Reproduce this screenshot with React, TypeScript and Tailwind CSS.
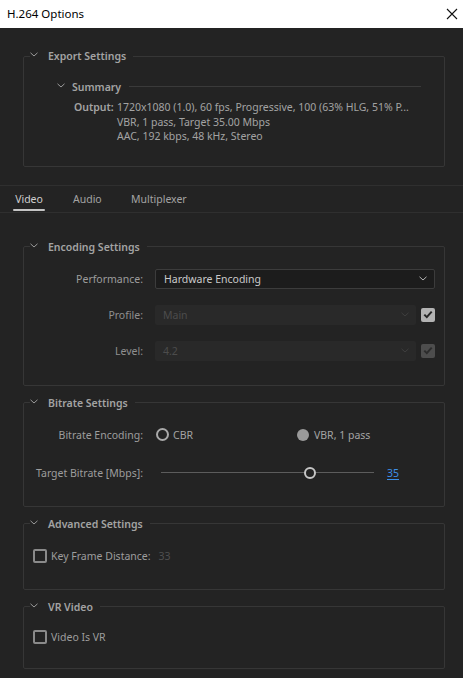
import React from "react";

function Chevron({ className = "" }: { className?: string }) {
  return (
    <svg width="8" height="5" viewBox="0 0 8 5" className={className}>
      <path d="M0.5 0.8 L4 4 L7.5 0.8" fill="none" stroke="#9a9a9a" strokeWidth="1" />
    </svg>
  );
}

function Group({
  title,
  children,
  className = "",
}: {
  title: string;
  children: React.ReactNode;
  className?: string;
}) {
  return (
    <fieldset className={"ml-[23px] mr-[18px] border border-[#363636] rounded-[2px] " + className}>
      <legend className="ml-[6px] pr-[7px] h-[16px] leading-[16px] flex items-center">
        <Chevron className="mr-[10px] mb-[3px]" />
        <span className="font-semibold text-[#a3a3a3] text-[10.5px]">{title}</span>
      </legend>
      {children}
    </fieldset>
  );
}

function Dropdown({
  value,
  disabled = false,
  className = "",
}: {
  value: string;
  disabled?: boolean;
  className?: string;
}) {
  return (
    <div
      className={
        "h-[20px] flex items-center justify-between pl-[8px] pr-[7px] rounded-[2px] " +
        (disabled
          ? "bg-[#292929] text-[#4c4c4c] "
          : "bg-[#1c1c1c] border border-[#3c3c3c] text-[#cacaca] ") +
        className
      }
    >
      <span>{value}</span>
      <svg width="8" height="5" viewBox="0 0 8 5">
        <path
          d="M0.5 0.8 L4 4 L7.5 0.8"
          fill="none"
          stroke={disabled ? "#3f3f3f" : "#b5b5b5"}
          strokeWidth="1"
        />
      </svg>
    </div>
  );
}

function CheckedBox({ disabled = false }: { disabled?: boolean }) {
  return (
    <div
      className={
        "w-[14px] h-[14px] rounded-[2px] flex items-center justify-center " +
        (disabled ? "bg-[#4d4d4d]" : "bg-[#b3b3b3]")
      }
    >
      <svg width="10" height="9" viewBox="0 0 10 9">
        <path
          d="M1.3 4.6 L3.8 7.1 L8.7 1.6"
          fill="none"
          stroke={disabled ? "#2c2c2c" : "#262626"}
          strokeWidth="2"
        />
      </svg>
    </div>
  );
}

function EmptyBox() {
  return <div className="w-[14px] h-[14px] rounded-[2px] border-2 border-[#8a8a8a]" />;
}

export default function App() {
  return (
    <div className="w-[463px] h-[678px] bg-[#232323] font-['Noto_Sans',sans-serif] text-[10.5px] leading-[16px] text-[#a3a3a3] overflow-hidden">
      {/* Title bar */}
      <div className="h-[28px] bg-white flex items-center justify-between pl-[7px] pr-[5px]">
        <span className="text-[11.5px] text-black">H.264 Options</span>
        <svg width="12" height="12" viewBox="0 0 12 12">
          <path d="M1 1 L11 11 M11 1 L1 11" stroke="#111" strokeWidth="1.1" />
        </svg>
      </div>

      <div className="pt-[20px]">
        <Group title="Export Settings">
          <div className="mt-[15px] h-[16px] flex items-center pl-[33px] pr-[23px]">
            <Chevron className="mb-[3px]" />
            <span className="ml-[7px] font-semibold">Summary</span>
            <div className="flex-1 h-px bg-[#3a3a3a] ml-[8px] mb-[2px]" />
          </div>
          <div className="mt-[5px] pl-[50px] pb-[22px] flex leading-[14.5px]">
            <span className="font-semibold w-[43px] shrink-0">Output:</span>
            <div className="flex flex-col">
              <span className="whitespace-nowrap">1720x1080 (1.0), 60 fps, Progressive, 100 (63% HLG, 51% P...</span>
              <span>VBR, 1 pass, Target 35.00 Mbps</span>
              <span>AAC, 192 kbps, 48 kHz, Stereo</span>
            </div>
          </div>
        </Group>

        {/* Tabs */}
        <div className="mt-[18px] border-t border-b border-[#2f2f2f] h-[28px] flex items-stretch pt-[1px]">
          <div className="relative ml-[13px] w-[32px] flex items-center justify-center text-[#cfcfcf]">
            Video
            <div className="absolute left-0 right-0 bottom-[1px] h-[2px] bg-[#c4c4c4] rounded-[1px]" />
          </div>
          <div className="ml-[28px] w-[58px] flex items-center">Audio</div>
          <div className="flex items-center">Multiplexer</div>
        </div>

        <div className="mt-[26px]">
          <Group title="Encoding Settings">
            <div className="mt-[14px] pb-[24px] flex flex-col gap-[16px] pr-[9px]">
              <div className="flex items-center">
                <span className="w-[119px] text-right shrink-0 text-[#9d9d9d]">Performance:</span>
                <Dropdown value="Hardware Encoding" className="ml-[12px] flex-1" />
              </div>
              <div className="flex items-center">
                <span className="w-[119px] text-right shrink-0 text-[#8f8f8f]">Profile:</span>
                <Dropdown value="Main" disabled className="ml-[12px] flex-1" />
                <div className="ml-[5px]">
                  <CheckedBox />
                </div>
              </div>
              <div className="flex items-center">
                <span className="w-[119px] text-right shrink-0 text-[#8f8f8f]">Level:</span>
                <Dropdown value="4.2" disabled className="ml-[12px] flex-1" />
                <div className="ml-[5px]">
                  <CheckedBox disabled />
                </div>
              </div>
            </div>
          </Group>
        </div>

        <div className="mt-[9px]">
          <Group title="Bitrate Settings">
            <div className="mt-[16px] pb-[25px]">
              <div className="flex items-center h-[16px]">
                <span className="w-[119px] text-right shrink-0 text-[#9d9d9d]">Bitrate Encoding:</span>
                <div className="ml-[13px] w-[141px] flex items-center">
                  <div className="w-[13px] h-[13px] rounded-full border-2 border-[#a9a9a9]" />
                  <span className="ml-[4px]">CBR</span>
                </div>
                <div className="flex items-center">
                  <div className="w-[12px] h-[12px] rounded-full bg-[#9a9a9a]" />
                  <span className="ml-[5px]">VBR, 1 pass</span>
                </div>
              </div>
              <div className="mt-[22px] flex items-center h-[16px]">
                <span className="w-[119px] text-right shrink-0 text-[#9d9d9d] whitespace-nowrap">Target Bitrate [Mbps]:</span>
                <div className="relative ml-[18px] w-[213px] h-[16px] flex items-center">
                  <div className="w-full h-px bg-[#5c5c5c]" />
                  <div className="absolute left-[143px] top-[2px] w-[12px] h-[12px] rounded-full border-2 border-[#c6c6c6] bg-[#232323]" />
                </div>
                <span className="ml-[13px] text-[#3d8fe6] underline underline-offset-[2px]">35</span>
              </div>
            </div>
          </Group>
        </div>

        <div className="mt-[9px]">
          <Group title="Advanced Settings">
            <div className="mt-[16px] pb-[25px] pl-[9px] flex items-center h-[16px] box-content">
              <EmptyBox />
              <span className="ml-[4px] text-[#9d9d9d]">Key Frame Distance:</span>
              <span className="ml-[8px] text-[#4f4f4f]">33</span>
            </div>
          </Group>
        </div>

        <div className="mt-[9px]">
          <Group title="VR Video">
            <div className="mt-[14px] pb-[23px] pl-[9px] flex items-center h-[16px] box-content">
              <EmptyBox />
              <span className="ml-[4px] text-[#9d9d9d]">Video Is VR</span>
            </div>
          </Group>
        </div>
      </div>
    </div>
  );
}
